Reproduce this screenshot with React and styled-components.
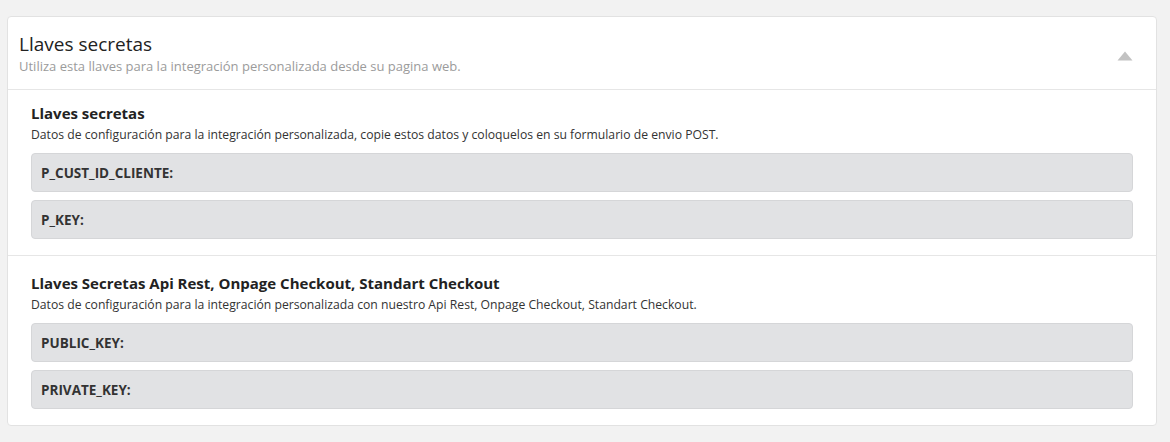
import React from 'react';
import styled, { createGlobalStyle } from 'styled-components';

const GlobalStyle = createGlobalStyle`
    body {
        margin: 0;
        background: #f2f2f2;
        font-family: "Open Sans", "Noto Sans", Arial, sans-serif;
        color: #333;
    }
`;

const Page = styled.div`
    padding: 16px 13px 16px 7px;
`;

const Card = styled.div`
    background: #fff;
    border: 1px solid #e2e2e2;
    border-radius: 4px;
`;

const Header = styled.div`
    display: flex;
    align-items: center;
    justify-content: space-between;
    padding: 14px 23px 14px 11px;
    border-bottom: 1px solid #e6e6e6;
`;

const Title = styled.h2`
    margin: 0;
    font-size: 19px;
    font-weight: 400;
    line-height: 26px;
    color: #222;
`;

const Subtitle = styled.p`
    margin: 0;
    font-size: 13px;
    line-height: 18px;
    color: #9b9b9b;
`;

const Toggle = styled.button`
    border: 0;
    background: none;
    padding: 0;
    margin-top: 5px;
    display: flex;
    cursor: pointer;
`;

const Section = styled.div`
    padding: ${(props) => props.top}px 23px 16px;
    border-bottom: ${(props) => (props.last ? 'none' : '1px solid #e6e6e6')};
`;

const SectionTitle = styled.h3`
    margin: 0;
    font-size: 15px;
    font-weight: 700;
    line-height: 20px;
    color: #222;
`;

const SectionText = styled.p`
    margin: 3px 0 9px;
    font-size: 12.2px;
    line-height: 18px;
    color: #333;
`;

const Fields = styled.div`
    display: flex;
    flex-direction: column;
    gap: 8px;
`;

const Field = styled.div`
    height: 37px;
    display: flex;
    align-items: center;
    padding: 0 9px;
    background: #e1e2e4;
    border: 1px solid #d5d6d8;
    border-radius: 4px;
    font-size: 13.5px;
    font-weight: 700;
    color: #333;
`;

const sections = [
    {
        title: 'Llaves secretas',
        text: 'Datos de configuración para la integración personalizada, copie estos datos y coloquelos en su formulario de envio POST.',
        fields: ['P_CUST_ID_CLIENTE:', 'P_KEY:'],
        top: 13,
    },
    {
        title: 'Llaves Secretas Api Rest, Onpage Checkout, Standart Checkout',
        text: 'Datos de configuración para la integración personalizada con nuestro Api Rest, Onpage Checkout, Standart Checkout.',
        fields: ['PUBLIC_KEY:', 'PRIVATE_KEY:'],
        top: 17,
    },
];

const App = () => {
    return (
        <Page>
            <GlobalStyle />
            <Card>
                <Header>
                    <div>
                        <Title>Llaves secretas</Title>
                        <Subtitle>Utiliza esta llaves para la integración personalizada desde su pagina web.</Subtitle>
                    </div>
                    <Toggle aria-label="Contraer">
                        <svg width="16" height="10" viewBox="0 0 16 10">
                            <path d="M8 0.5 L15.5 9.5 L0.5 9.5 Z" fill="#c2c2c2" strokeLinejoin="round" />
                        </svg>
                    </Toggle>
                </Header>
                {sections.map((s, i) => (
                    <Section key={s.title} top={s.top} last={i === sections.length - 1}>
                        <SectionTitle>{s.title}</SectionTitle>
                        <SectionText>{s.text}</SectionText>
                        <Fields>
                            {s.fields.map((f) => (
                                <Field key={f}>{f}</Field>
                            ))}
                        </Fields>
                    </Section>
                ))}
            </Card>
        </Page>
    );
};

export default App;
